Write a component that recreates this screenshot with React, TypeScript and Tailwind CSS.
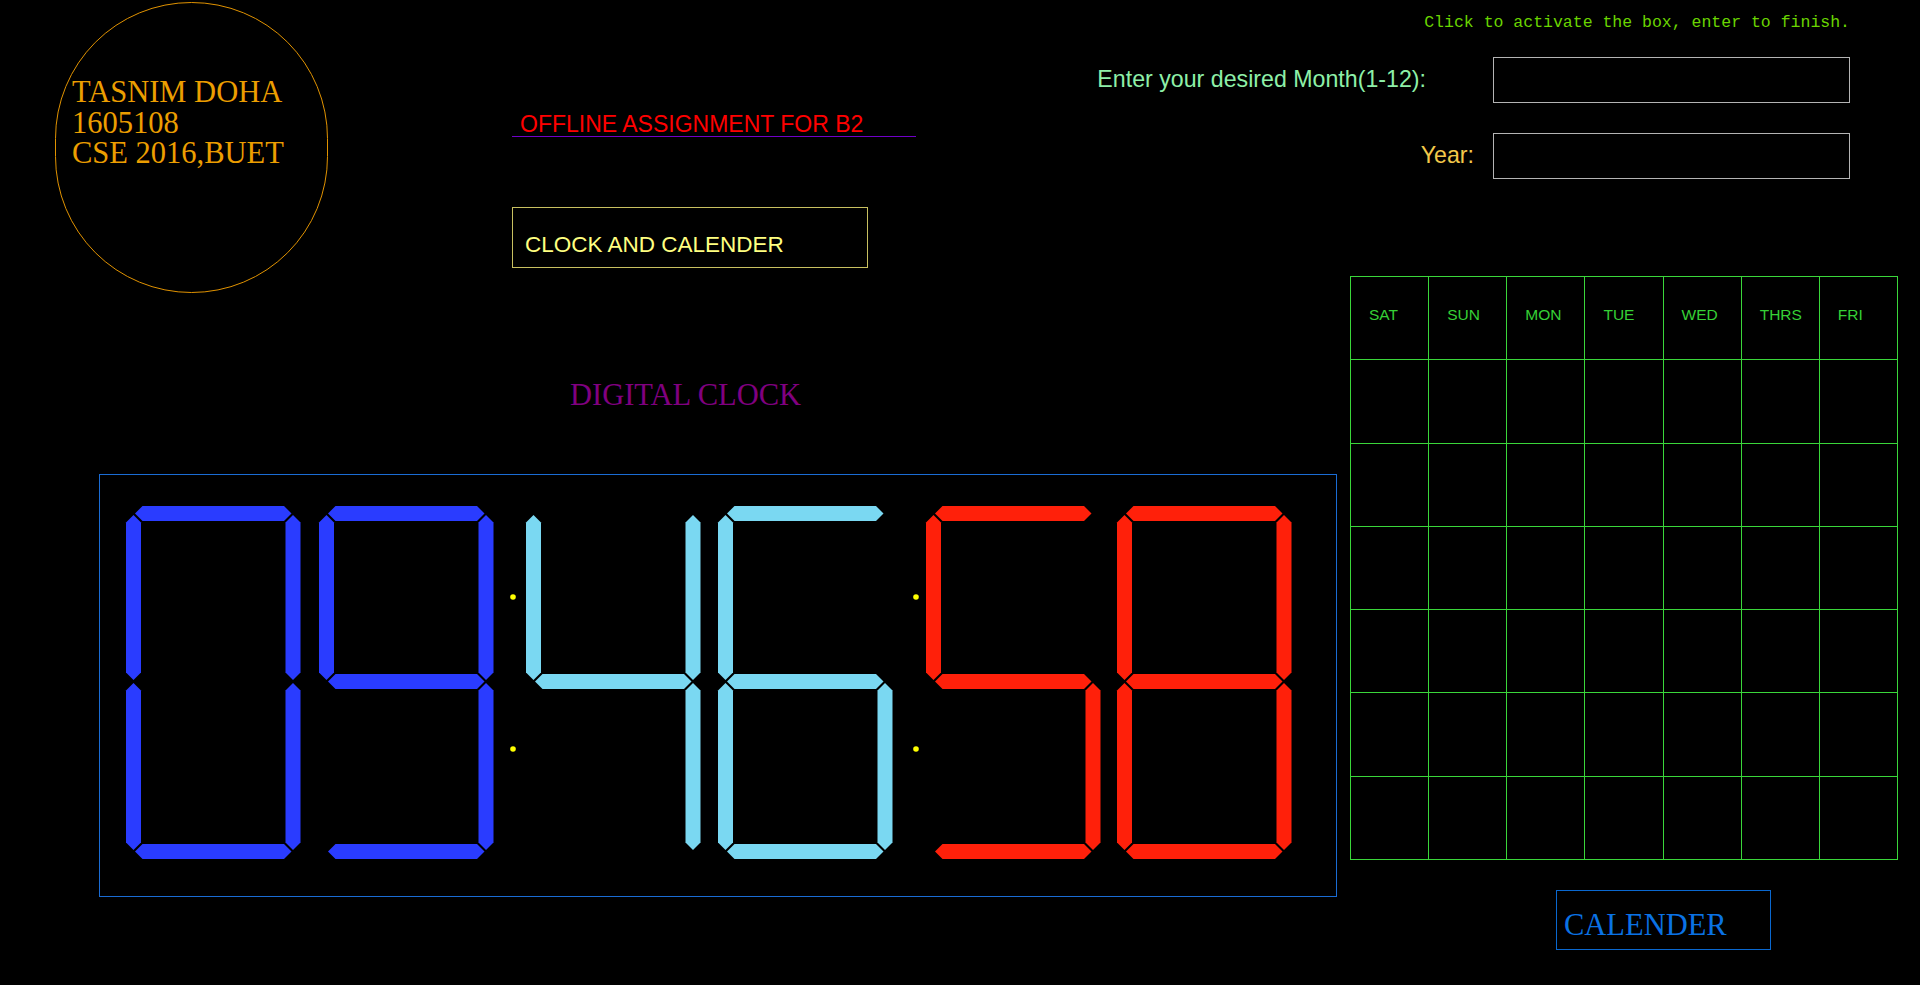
import React from "react";

// seven-segment geometry, in page pixels
const H = 7.5;
const G = 1.5;
const YT = 513.5;
const YM = 681.5;
const YB = 851.5;

type Pt = [number, number];

function hseg(x0: number, x1: number, y: number): Pt[] {
  return [
    [x0 + G, y],
    [x0 + G + H, y - H],
    [x1 - G - H, y - H],
    [x1 - G, y],
    [x1 - G - H, y + H],
    [x0 + G + H, y + H],
  ];
}

function vseg(x: number, y0: number, y1: number): Pt[] {
  return [
    [x, y0 + G],
    [x + H, y0 + G + H],
    [x + H, y1 - G - H],
    [x, y1 - G],
    [x - H, y1 - G - H],
    [x - H, y0 + G + H],
  ];
}

const DIGITS: Record<string, string> = {
  "0": "abcdef",
  "1": "bc",
  "2": "abdeg",
  "3": "abcdg",
  "4": "bcfg",
  "5": "acdfg",
  "6": "acdefg",
  "7": "abc",
  "8": "abcdefg",
  "9": "abcdfg",
};

function segments(left: number, segs: string) {
  const xl = left + 7.5;
  const xr = left + 167;
  const map: Record<string, Pt[]> = {
    a: hseg(xl, xr, YT),
    b: vseg(xr, YT, YM),
    c: vseg(xr, YM, YB),
    d: hseg(xl, xr, YB),
    e: vseg(xl, YM, YB),
    f: vseg(xl, YT, YM),
    g: hseg(xl, xr, YM),
  };
  return segs.split("").map((s) => map[s].map((p) => p.join(",")).join(" "));
}

const clockDigits = [
  { left: 126, d: "0", color: "#2a3cff" },
  { left: 319, d: "9", color: "#2a3cff" },
  { left: 526, d: "4", color: "#7ad8f2" },
  { left: 718, d: "6", color: "#7ad8f2" },
  { left: 926, d: "5", color: "#ff200a" },
  { left: 1117, d: "8", color: "#ff200a" },
];

const days = ["SAT", "SUN", "MON", "TUE", "WED", "THRS", "FRI"];

function Clock() {
  return (
    <svg width="1236" height="421" viewBox="100 475 1236 421" className="block">
      {clockDigits.map((dg, i) =>
        segments(dg.left, DIGITS[dg.d]).map((pts, j) => (
          <polygon key={`${i}-${j}`} points={pts} fill={dg.color} />
        ))
      )}
      {[513, 916].map((x) => (
        <g key={x} fill="#ffff00">
          <circle cx={x} cy={597} r={2.8} />
          <circle cx={x} cy={749} r={2.8} />
        </g>
      ))}
    </svg>
  );
}

export default function App() {
  return (
    <div className="w-[1920px] h-[985px] bg-black overflow-hidden flex flex-col">
      {/* top band */}
      <div className="h-[276px] shrink-0 flex items-start">
        <div className="ml-[55px] mt-[2px] w-[273px] h-[291px] shrink-0 rounded-full border border-[#e09200] pt-[74px] pl-[16px] font-['Liberation_Serif',serif] text-[30.5px] leading-[30.5px] text-[#ec9e00]">
          <div>TASNIM DOHA</div>
          <div>1605108</div>
          <div>CSE 2016,BUET</div>
        </div>

        <div className="ml-[184px] mt-[113px] w-[404px] flex flex-col font-['Liberation_Sans',sans-serif]">
          <div className="pl-[8px] text-[23px] leading-none text-[#ff0000] border-b-[1.5px] border-[#7000c8]">
            OFFLINE ASSIGNMENT FOR B2
          </div>
          <div className="mt-[70px] w-[356px] h-[61px] border border-[#c8c060] pt-[26px] pl-[12px] text-[22.5px] leading-none text-[#ffff80]">
            CLOCK AND CALENDER
          </div>
        </div>

        <div className="ml-auto mr-[70px] flex flex-col items-end font-['Liberation_Sans',sans-serif]">
          <div className="mt-[15px] font-['Liberation_Mono',monospace] text-[16.5px] leading-none text-[#6ad400]">
            Click to activate the box, enter to finish.
          </div>
          <div className="mt-[25.5px] flex items-center">
            <span className="mr-[67px] text-[23.2px] leading-none text-[#8ef0a8]">Enter your desired Month(1-12):</span>
            <div className="w-[357px] h-[46px] border border-[#b4b4b4]" />
          </div>
          <div className="mt-[30px] flex items-center">
            <span className="mr-[19px] text-[23.2px] leading-none text-[#f2c84a]">Year:</span>
            <div className="w-[357px] h-[46px] border border-[#b4b4b4]" />
          </div>
        </div>
      </div>

      {/* bottom band */}
      <div className="flex items-start">
        <div className="ml-[99px] w-[1238px] flex flex-col">
          <div className="mt-[104px] ml-[471px] font-['Liberation_Serif',serif] text-[30.5px] leading-none text-[#800080]">
            DIGITAL CLOCK
          </div>
          <div className="mt-[63px] h-[423px] border border-[#1a6cd4]">
            <Clock />
          </div>
        </div>

        <div className="ml-[13px] flex flex-col">
          <div className="w-[548px] h-[584px] grid grid-cols-7 grid-rows-7 gap-px p-px bg-[#3ad63a]">
            {Array.from({ length: 49 }).map((_, i) => (
              <div key={i} className="bg-black pt-[30px] pl-[18px] font-['Liberation_Sans',sans-serif] text-[15.5px] leading-none text-[#36d036]">
                {i < 7 ? days[i] : null}
              </div>
            ))}
          </div>
          <div className="mt-[30px] ml-[206px] w-[215px] h-[60px] border-[1.5px] border-[#0a68d0] pt-[19px] pl-[7px] font-['Liberation_Serif',serif] text-[30.5px] leading-none text-[#0a72e4]">
            CALENDER
          </div>
        </div>
      </div>
    </div>
  );
}
